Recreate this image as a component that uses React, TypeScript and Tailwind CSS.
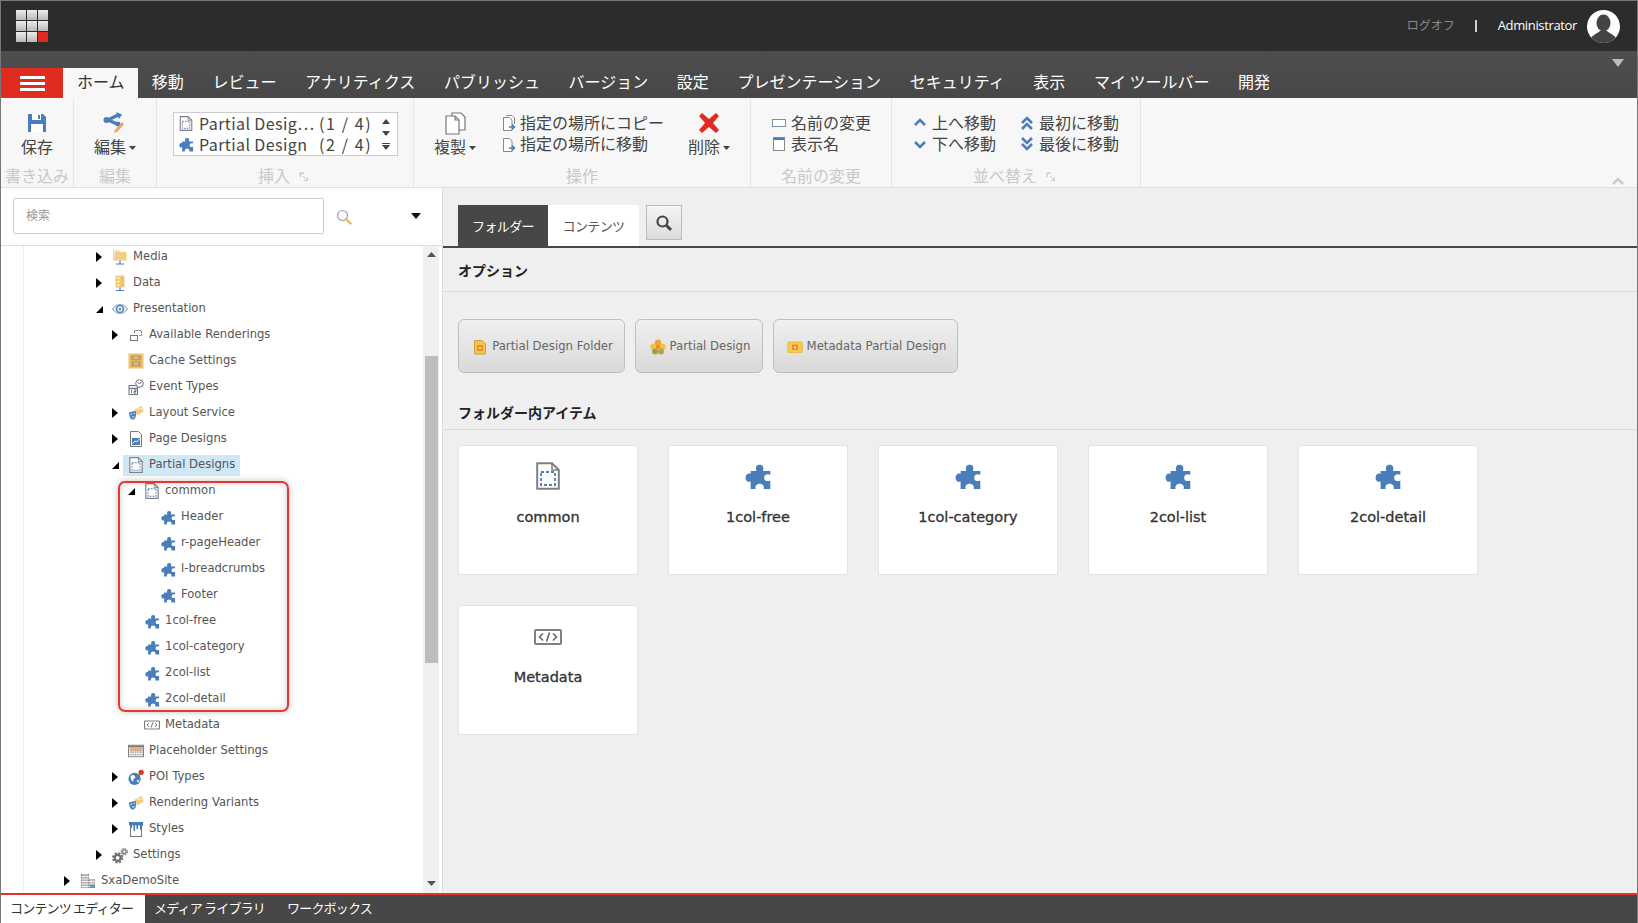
import React from "react";

const BLUE = "#4a7ebb";

function Puzzle({ s = 16, c = BLUE }: { s?: number; c?: string }) {
  return (
    <svg width={s} height={s} viewBox="0 0 24 24" className="shrink-0">
      <path fill={c} d="M5 7H10C9 3 10.5 1.5 13 1.5C15.5 1.5 17 3 16 7H22.5V10.5C19.5 9 17 10.5 17 13C17 15.5 19.5 17 22.5 15.5V23H16.5C17.5 20.5 15.5 18.5 13 18.5C10.5 18.5 8.5 20.5 9.5 23H5V16.5C2.5 17.5 .5 15.5 .5 13C.5 10.5 2.5 8.7 5 9.7Z" />
    </svg>
  );
}
function DashDoc({ w = 16, h = 16 }: { w?: number; h?: number }) {
  return (
    <svg width={w} height={h} viewBox="0 0 24 28" className="shrink-0">
      <path d="M1.2 1.2H16L22.8 8V26.8H1.2Z" fill="#fff" stroke="#808080" strokeWidth="2" />
      <path d="M16 1.5V8H22.5" fill="none" stroke="#808080" strokeWidth="1.5" />
      <rect x="5" y="10" width="14" height="13" fill="none" stroke="#4a7ebb" strokeWidth="1.8" strokeDasharray="3 2" />
    </svg>
  );
}
function CodeBox({ w = 16, h = 10 }: { w?: number; h?: number }) {
  return (
    <svg width={w} height={h} viewBox="0 0 28 16" className="shrink-0">
      <rect x="1" y="1" width="26" height="14" rx="1" fill="#fff" stroke="#808080" strokeWidth="2" />
      <path d="M9 4.5L5.5 8L9 11.5M19 4.5L22.5 8L19 11.5M15.5 3.5L12.5 12.5" fill="none" stroke="#666" strokeWidth="1.6" />
    </svg>
  );
}
function Folder() {
  return (
    <svg width="16" height="17" viewBox="0 0 16 17">
      <path d="M1.5 1H6.500L8 3H14.500V11.500H1.500Z" fill="#f5cc86" />
      <path d="M1.500 1H6.500L8 3H3V8L1.500 10Z" fill="#f7f0e2" stroke="#e3c48d" strokeWidth=".5" />
      <path d="M8 11.500V15M4 15H12" stroke="#4a7ebb" strokeWidth="1.200" />
    </svg>
  );
}
function DataIcon() {
  return (
    <svg width="16" height="17" viewBox="0 0 16 17">
      <rect x="3.500" y=".5" width="9" height="12" fill="#f2c879" />
      <path d="M5 3H8M5 6.500H8M5 10H8" stroke="#fff" />
      <path d="M10 3H11M10 6.500H11M10 10H11" stroke="#c98f3a" />
      <path d="M8 12.500V15.500M4 15.500H12" stroke="#4a7ebb" strokeWidth="1.200" />
    </svg>
  );
}
function Eye() {
  return (
    <svg width="16" height="16" viewBox="0 0 16 16">
      <path d="M.5 8C3 4 6 3.500 8 3.500S13 4 15.500 8C13 12 10 12.500 8 12.500S3 12 .5 8Z" fill="#e4ecf6" stroke="#8c9fb8" />
      <circle cx="8" cy="8" r="3.400" fill="#fff" stroke="#4a7ebb" strokeWidth="1.400" />
      <circle cx="8" cy="8" r="1.500" fill="#6d8fba" />
    </svg>
  );
}
function Renderings() {
  return (
    <svg width="16" height="16" viewBox="0 0 16 16" fill="none" stroke="#777">
      <rect x="2.500" y="8.500" width="7" height="5" />
      <path d="M6.500 6V3.500H13.500V8.500H11" strokeDasharray="2.500 .8" />
    </svg>
  );
}
function Cache() {
  return (
    <svg width="16" height="16" viewBox="0 0 16 16">
      <rect x=".5" y=".5" width="15" height="15" fill="#efc06e" />
      <rect x="3" y="2.500" width="10" height="5" fill="#bfa05f" />
      <rect x="3" y="8.500" width="10" height="5" fill="#bfa05f" />
      <path d="M6 5H10M6 11H10" stroke="#f5e3b8" />
    </svg>
  );
}
function EventIcon() {
  return (
    <svg width="16" height="16" viewBox="0 0 16 16" fill="none" stroke="#707070">
      <rect x="1" y="6.500" width="8.500" height="9" />
      <path d="M1 9.500H9.500" strokeWidth="1.500" stroke="#5a7ea8" />
      <path d="M3.500 11V14M6 11H8V12.500H6V14H8" />
      <circle cx="11.500" cy="4.500" r="3.800" fill="#fff" />
      <path d="M9.500 3L11.500 5L13.500 2.500" />
    </svg>
  );
}
function Masks() {
  return (
    <svg width="17" height="16" viewBox="0 0 17 16">
      <path d="M7 4.500L14 .5C15.500 2 16.500 4.500 16.500 6.500L10 10.500Z" fill="#f3cb7c" />
      <circle cx="11" cy="3.800" r=".9" fill="#fff" />
      <circle cx="14" cy="3.500" r=".9" fill="#fff" />
      <path d="M1 7.500L8 5.500C9.500 9 8.500 14 5.500 15C2.500 15.500 1 11 1 7.500Z" fill="#4a7ebb" />
      <path d="M2.500 9.500L4.500 9M6 8.500L7.500 8M4 12C5 12.800 6 12.500 7 11" stroke="#fff" fill="none" />
    </svg>
  );
}
function PageIcon() {
  return (
    <svg width="16" height="16" viewBox="0 0 16 16">
      <path d="M2.500 .5H10.500L13.500 3.500V15.500H2.500Z" fill="#fff" stroke="#777" />
      <rect x="4" y="7" width="8" height="7" fill="#4a7ebb" />
      <path d="M4.500 12.500L7 10L8.500 11L11.500 8" stroke="#fff" fill="none" />
    </svg>
  );
}
function Placeholder() {
  return (
    <svg width="18" height="16" viewBox="0 0 18 16">
      <rect x=".5" y="1.500" width="17" height="13" fill="#fff" stroke="#777" />
      <rect x="1" y="2" width="16" height="2" fill="#777" />
      <rect x="2" y="4.500" width="14" height="4" fill="#f0b483" />
      <path d="M3.500 4V14.500M6 4V14.500M8.500 4V14.500M11 4V14.500M13.500 4V14.500M16 4V14.500M1 7H17M1 9.500H17M1 12H17" stroke="#aaa" strokeWidth=".7" />
    </svg>
  );
}
function Poi() {
  return (
    <svg width="17" height="17" viewBox="0 0 17 17">
      <circle cx="7" cy="10" r="6.500" fill="#4a7ebb" />
      <path d="M2.500 7L6 5.500L8 8.500L5.500 10.500L6 13L3.500 11.500ZM9 12L12 10.500L11 14Z" fill="#fff" />
      <path d="M11.500 7L13.500 4" stroke="#777" strokeWidth="1.200" />
      <circle cx="14" cy="3" r="2.800" fill="#e2332a" />
    </svg>
  );
}
function Styles() {
  return (
    <svg width="16" height="16" viewBox="0 0 16 16">
      <rect x="2.500" y="2.500" width="11" height="13" fill="#fff" stroke="#777" />
      <path d="M1 1H15V5H13.500V9H12V4.500H10V8H8.500V4.500H7V10H5.500V4.500H4V7H2.500V4.500H1Z" fill="#4a7ebb" />
    </svg>
  );
}
function Gears() {
  return (
    <svg width="17" height="17" viewBox="0 0 17 17">
      <circle cx="6" cy="11" r="3.200" fill="none" stroke="#6f6f6f" strokeWidth="2.400" />
      <circle cx="6" cy="11" r="5" fill="none" stroke="#6f6f6f" strokeWidth="2" strokeDasharray="2.300 1.630" />
      <circle cx="13" cy="4.500" r="2" fill="none" stroke="#8a8a8a" strokeWidth="1.600" />
      <circle cx="13" cy="4.500" r="3.300" fill="none" stroke="#8a8a8a" strokeWidth="1.400" strokeDasharray="1.600 1" />
    </svg>
  );
}
function Building() {
  return (
    <svg width="16" height="16" viewBox="0 0 16 16">
      <rect x="1" y="1" width="8" height="14" fill="#888" />
      <rect x="9" y="6" width="6" height="9" fill="#9a9a9a" />
      <path d="M3 1V15M5 1V15M7 1V15M11 6V15M13 6V15M1 3.500H9M1 6H9M1 8.500H15M1 11H15M1 13.500H15" stroke="#fff" strokeWidth=".8" />
      <rect x="10" y="11.500" width="5" height="3.500" fill="#4a7ebb" opacity=".75" />
    </svg>
  );
}
function Mag({ s = 16, c = "#9fa6ad" }: { s?: number; c?: string }) {
  return (
    <svg width={s} height={s} viewBox="0 0 16 16">
      <circle cx="6.500" cy="6.500" r="5" fill="#fff" stroke={c} strokeWidth="1.200" />
      <path d="M10 10L14.500 14.500" stroke="#e8b96a" strokeWidth="2.400" strokeLinecap="round" />
    </svg>
  );
}
function Caret() {
  return (
    <svg width="7" height="4" viewBox="0 0 7 4" className="ml-[3px] mt-[4px] shrink-0">
      <path d="M0 0H7L3.500 4Z" fill="#444" />
    </svg>
  );
}
function Launcher() {
  return (
    <svg width="9" height="9" viewBox="0 0 9 9" className="ml-[9px] mr-[4px] mt-[3px]">
      <path d="M.5 .5H5V2H2V5H.5Z" fill="#ccc" />
      <path d="M4 4L8.500 8.500M8.500 5V8.500H5" stroke="#ccc" fill="none" />
    </svg>
  );
}

const rows: { t: string; l: 0 | 2 | 3 | 4 | 5; a?: "r" | "d"; i: React.ReactNode; sel?: boolean }[] = [
  { t: "Media", l: 2, a: "r", i: <Folder /> },
  { t: "Data", l: 2, a: "r", i: <DataIcon /> },
  { t: "Presentation", l: 2, a: "d", i: <Eye /> },
  { t: "Available Renderings", l: 3, a: "r", i: <Renderings /> },
  { t: "Cache Settings", l: 3, i: <Cache /> },
  { t: "Event Types", l: 3, i: <EventIcon /> },
  { t: "Layout Service", l: 3, a: "r", i: <Masks /> },
  { t: "Page Designs", l: 3, a: "r", i: <PageIcon /> },
  { t: "Partial Designs", l: 3, a: "d", i: <DashDoc />, sel: true },
  { t: "common", l: 4, a: "d", i: <DashDoc /> },
  { t: "Header", l: 5, i: <Puzzle s={15} /> },
  { t: "r-pageHeader", l: 5, i: <Puzzle s={15} /> },
  { t: "l-breadcrumbs", l: 5, i: <Puzzle s={15} /> },
  { t: "Footer", l: 5, i: <Puzzle s={15} /> },
  { t: "1col-free", l: 4, i: <Puzzle s={15} /> },
  { t: "1col-category", l: 4, i: <Puzzle s={15} /> },
  { t: "2col-list", l: 4, i: <Puzzle s={15} /> },
  { t: "2col-detail", l: 4, i: <Puzzle s={15} /> },
  { t: "Metadata", l: 4, i: <CodeBox /> },
  { t: "Placeholder Settings", l: 3, i: <Placeholder /> },
  { t: "POI Types", l: 3, a: "r", i: <Poi /> },
  { t: "Rendering Variants", l: 3, a: "r", i: <Masks /> },
  { t: "Styles", l: 3, a: "r", i: <Styles /> },
  { t: "Settings", l: 2, a: "r", i: <Gears /> },
  { t: "SxaDemoSite", l: 0, a: "r", i: <Building /> },
];
const indent: Record<number, string> = {
  0: "pl-[36px]",
  2: "pl-[68px]",
  3: "pl-[84px]",
  4: "pl-[100px]",
  5: "pl-[116px]",
};

const tabs = ["移動", "レビュー", "アナリティクス", "パブリッシュ", "バージョン", "設定", "プレゼンテーション", "セキュリティ", "表示", "マイ ツールバー", "開発"];
const cards = ["common", "1col-free", "1col-category", "2col-list", "2col-detail", "Metadata"];

function Group({ w, label, launcher, className, children }: { w: string; label: string; launcher?: boolean; className?: string; children: React.ReactNode }) {
  return (
    <div className={`${w} shrink-0 flex flex-col border-r border-[#e6e6e6]`}>
      <div className={`h-[66px] flex ${className ?? ""}`}>{children}</div>
      <div className="h-[24px] flex items-center justify-center text-[16px] leading-[24px] text-[#c9c9c9]">
        {label}
        {launcher && <Launcher />}
      </div>
    </div>
  );
}
function Large({ icon, label, caret }: { icon: React.ReactNode; label: string; caret?: boolean }) {
  return (
    <div className="flex flex-col items-center pt-[14px]">
      <div className="h-[22px] flex items-center justify-center">{icon}</div>
      <div className="h-[24px] flex items-center text-[16px] leading-[24px] text-[#444]">
        {label}
        {caret && <Caret />}
      </div>
    </div>
  );
}
function Small({ icon, label }: { icon: React.ReactNode; label: string }) {
  return (
    <div className="h-[21px] flex items-center text-[16px] leading-[21px] text-[#444]">
      <span className="w-[16px] h-[16px] flex items-center justify-center mr-[4px]">{icon}</span>
      {label}
    </div>
  );
}
function Chev({ dir, dbl }: { dir: "u" | "d"; dbl?: boolean }) {
  const d = dir === "u" ? "M2 9L7 4L12 9" : "M2 5L7 10L12 5";
  return (
    <svg width="14" height="14" viewBox="0 0 14 14" fill="none" stroke={BLUE} strokeWidth="2.600">
      {dbl ? (
        dir === "u" ? (
          <>
            <path d="M2 7L7 2L12 7" />
            <path d="M2 13L7 8L12 13" />
          </>
        ) : (
          <>
            <path d="M2 1L7 6L12 1" />
            <path d="M2 7L7 12L12 7" />
          </>
        )
      ) : (
        <path d={d} />
      )}
    </svg>
  );
}
function CopyDoc({ arrow }: { arrow?: boolean }) {
  return (
    <svg width="15" height="16" viewBox="0 0 15 16" fill="#fff" stroke="#888">
      {!arrow && <path d="M5.500 .5H11L13.500 3V9" />}
      <path d="M2.500 2.500H8.500L11 5V15.500H2.500Z" />
      <path d="M8 12H13.500M11 9.500L13.500 12L11 14.500" stroke={BLUE} strokeWidth="1.500" fill="none" />
    </svg>
  );
}

export default function App() {
  return (
    <div className="h-screen w-full overflow-hidden flex flex-col border-l border-t border-r border-[#777] bg-[#efefef] font-['DejaVu_Sans','Noto_Sans_CJK_JP',sans-serif]">
      {/* top bar */}
      <header className="h-[50px] shrink-0 bg-[#2c2c2c] flex items-center pl-[15px] pr-[17px]">
        <div className="grid grid-cols-3 gap-[1px] w-[32px] h-[32px]">
          {Array.from({ length: 9 }).map((_, i) => (
            <div key={i} className={i === 8 ? "bg-[#e22b1f]" : "bg-gradient-to-b from-[#ececec] to-[#b9b9b9]"} />
          ))}
        </div>
        <div className="ml-auto flex items-center font-['Open_Sans','Noto_Sans_CJK_JP',sans-serif] text-[13px]">
          <span className="text-[#8a8a8a] text-[12px]">ログオフ</span>
          <span className="ml-[20px] w-[2px] h-[12px] bg-[#cfcfcf]" />
          <span className="text-white ml-[21px] tracking-[-0.35px]">Administrator</span>
          <svg width="33" height="33" viewBox="0 0 33 33" className="ml-[10px]">
            <defs>
              <clipPath id="av">
                <circle cx="16.500" cy="16.500" r="16.500" />
              </clipPath>
            </defs>
            <circle cx="16.500" cy="16.500" r="16.500" fill="#fff" />
            <g clipPath="url(#av)" fill="#444">
              <ellipse cx="16.500" cy="13" rx="7" ry="8.500" />
              <path d="M2 33C3 25 10 24 13 21H20C23 24 30 25 31 33Z" />
            </g>
          </svg>
        </div>
      </header>

      {/* tab strip */}
      <nav className="h-[47px] shrink-0 relative bg-gradient-to-b from-[#4e4e4e] to-[#474747] flex items-end text-[16px] leading-[26px] text-white font-['Noto_Sans_CJK_JP',sans-serif]">
        <div className="w-[62px] h-[30px] bg-[#e22b1f] flex flex-col items-center justify-center gap-[3px]">
          <i className="block w-[25px] h-[3px] bg-white" />
          <i className="block w-[25px] h-[3px] bg-white" />
          <i className="block w-[25px] h-[3px] bg-white" />
        </div>
        <div className="h-[30px] pl-[14px] pr-[13px] bg-[#f7f7f7] text-[#333]">ホーム</div>
        {tabs.map((t) => (
          <div key={t} className="h-[30px] px-[14.3px] whitespace-nowrap">
            {t}
          </div>
        ))}
        <svg width="12" height="8" viewBox="0 0 12 8" className="absolute right-[13px] top-[8px]">
          <path d="M0 0H12L6 8Z" fill="#bdbdbd" />
        </svg>
      </nav>

      {/* ribbon */}
      <section className="h-[90px] shrink-0 bg-[#f7f7f7] border-b border-[#dfdfdf] flex relative font-['Noto_Sans_CJK_JP',sans-serif]">
        <Group w="w-[73px]" label="書き込み" className="justify-center">
          <Large
            label="保存"
            icon={
              <svg width="20" height="20" viewBox="0 0 20 20">
                <path d="M1 1H16L19 4V19H1Z" fill={BLUE} />
                <rect x="5" y="1" width="9" height="6" fill="#fff" />
                <rect x="4" y="11" width="12" height="8" fill="#fff" />
                <rect x="11" y="2" width="2" height="4" fill={BLUE} />
              </svg>
            }
          />
        </Group>
        <Group w="w-[83px]" label="編集" className="justify-center">
          <Large
            label="編集"
            caret
            icon={
              <svg width="23" height="22" viewBox="0 0 23 22">
                <path d="M15 3L5 8L14 12" fill="none" stroke={BLUE} strokeWidth="3.200" />
                <path d="M13 0L19 2.500L16 7Z" fill={BLUE} />
                <circle cx="3.500" cy="8" r="3" fill={BLUE} />
                <circle cx="15" cy="12" r="2.500" fill={BLUE} />
                <path d="M19 10L12 18L11 21L14 20L21 12.500Z" fill="#eda45e" />
              </svg>
            }
          />
        </Group>
        <Group w="w-[257px]" label="挿入" launcher>
          <div className="ml-[16px] mt-[14px] w-[225px] h-[44px] bg-white border border-[#ccc] flex text-[16px] leading-[21px] text-[#444] tracking-[0.4px] whitespace-nowrap">
            <div className="flex-1 pl-[5px]">
              <div className="flex items-center h-[21px]">
                <DashDoc w={14} h={15} />
                <span className="ml-[6px] w-[115px]">Partial Desig⋯</span>
                <span className="ml-[5px] tracking-[1.600px]">(1 / 4)</span>
              </div>
              <div className="flex items-center h-[21px]">
                <Puzzle s={15} />
                <span className="ml-[5px] w-[115px]">Partial Design</span>
                <span className="ml-[5px] tracking-[1.600px]">(2 / 4)</span>
              </div>
            </div>
            <div className="w-[22px] flex flex-col items-center justify-center gap-[7px]">
              <svg width="8" height="5" viewBox="0 0 8 5"><path d="M4 0L8 5H0Z" fill="#444" /></svg>
              <svg width="8" height="5" viewBox="0 0 8 5"><path d="M0 0H8L4 5Z" fill="#444" /></svg>
              <svg width="8" height="7" viewBox="0 0 8 7"><path d="M0 0H8V1H0ZM0 2H8L4 7Z" fill="#444" /></svg>
            </div>
          </div>
        </Group>
        <Group w="w-[337px]" label="操作" className="pl-[20px]">
          <Large
            label="複製"
            caret
            icon={
              <svg width="22" height="23" viewBox="0 0 22 23" fill="#fff" stroke="#777" strokeWidth="1.200">
                <path d="M8 1H17L21 5V18H8Z" />
                <path d="M2 4H11L15 8V22H2Z" />
                <path d="M11 4V8H15" fill="none" />
              </svg>
            }
          />
          <div className="ml-[24px] pt-[14px]">
            <Small icon={<CopyDoc />} label="指定の場所にコピー" />
            <Small icon={<CopyDoc arrow />} label="指定の場所に移動" />
          </div>
          <div className="ml-[24px]">
            <Large
              label="削除"
              caret
              icon={
                <svg width="22" height="22" viewBox="0 0 22 22">
                  <path d="M4 1L11 7L18 1L21 4L15 11L21 18L18 21L11 15L4 21L1 18L7 11L1 4Z" fill="#e22b1f" />
                </svg>
              }
            />
          </div>
        </Group>
        <Group w="w-[141px]" label="名前の変更" className="pl-[20px] pt-[14px] flex-col">
          <Small
            label="名前の変更"
            icon={
              <svg width="14" height="8" viewBox="0 0 14 8" fill="#fff" stroke="#7c8ea5">
                <rect x=".5" y=".5" width="13" height="7" />
              </svg>
            }
          />
          <Small
            label="表示名"
            icon={
              <svg width="12" height="14" viewBox="0 0 12 14" fill="#fff" stroke="#888">
                <rect x=".5" y=".5" width="11" height="13" />
                <rect x="1" y="1" width="10" height="2" fill={BLUE} stroke="none" />
              </svg>
            }
          />
        </Group>
        <Group w="w-[249px]" label="並べ替え" launcher className="pl-[20px] pt-[14px]">
          <div>
            <Small icon={<Chev dir="u" />} label="上へ移動" />
            <Small icon={<Chev dir="d" />} label="下へ移動" />
          </div>
          <div className="ml-[23px]">
            <Small icon={<Chev dir="u" dbl />} label="最初に移動" />
            <Small icon={<Chev dir="d" dbl />} label="最後に移動" />
          </div>
        </Group>
        <svg width="12" height="8" viewBox="0 0 12 8" className="absolute right-[13px] bottom-[2px]" fill="none" stroke="#ccc" strokeWidth="2.500">
          <path d="M1 7L6 2L11 7" />
        </svg>
      </section>

      {/* body */}
      <main className="flex-1 min-h-0 flex">
        <aside className="w-[441px] shrink-0 flex flex-col bg-white">
          <div className="h-[58px] shrink-0 border-b border-[#ddd] flex items-center pl-[12px] pr-[21px]">
            <div className="w-[311px] h-[36px] mb-[2px] border border-[#ccc] rounded-[2px] bg-white pl-[12px] text-[12px] leading-[32px] text-[#999] font-['Noto_Sans_CJK_JP',sans-serif]">
              検索
            </div>
            <span className="ml-[12px] mt-[1px]">
              <Mag />
            </span>
            <svg width="10" height="6" viewBox="0 0 10 6" className="ml-auto mt-[-1px]">
              <path d="M0 0H10L5 6Z" fill="#111" />
            </svg>
          </div>
          <div className="flex-1 min-h-0 flex overflow-hidden relative">
            <div className="flex-1 ml-[22px] border-l border-[#eee] overflow-hidden">
              <div className="mt-[-2px]">
                {rows.map((r) => (
                  <div key={r.t} className={`h-[26px] flex items-center text-[11.6px] text-[#555] ${indent[r.l]}`}>
                    <span className="w-[14px] h-[14px] flex items-center justify-center shrink-0">
                      {r.a === "r" && (
                        <svg width="6" height="10" viewBox="0 0 6 10">
                          <path d="M0 0L6 5L0 10Z" fill="#000" />
                        </svg>
                      )}
                      {r.a === "d" && (
                        <svg width="7" height="7" viewBox="0 0 7 7">
                          <path d="M7 0V7H0Z" fill="#000" />
                        </svg>
                      )}
                    </span>
                    <span className={`flex items-center h-[21px] ${r.sel ? "ml-[1px] pl-[5px] pr-[5px] bg-[#d0e7f6]" : "ml-[6px]"}`}>
                      <span className="w-[16px] h-[16px] flex items-center justify-center">{r.i}</span>
                      <span className="ml-[5px] whitespace-nowrap">{r.t}</span>
                    </span>
                  </div>
                ))}
              </div>
            </div>
            <div className="w-[16px] mr-[3px] bg-[#f0f0f0] flex flex-col items-center relative">
              <svg width="9" height="5" viewBox="0 0 9 5" className="mt-[6px]">
                <path d="M4.500 0L9 5H0Z" fill="#555" />
              </svg>
              <div className="w-[13px] h-[307px] mt-[99px] bg-[#bdbdbd]" />
              <svg width="9" height="5" viewBox="0 0 9 5" className="mt-auto mb-[7px]">
                <path d="M0 0H9L4.500 5Z" fill="#555" />
              </svg>
            </div>
            <div className="absolute left-[117px] top-[235px] w-[171px] h-[231px] rounded-[7px] border-2 border-[#ee3333] shadow-[0_0_6px_rgba(0,0,0,0.25),inset_0_0_6px_rgba(0,0,0,0.2)]" />
          </div>
        </aside>

        <div className="flex-1 min-w-0 border-l border-[#dcdcdc] bg-[#efefef]">
          <div className="h-[60px] border-b-2 border-[#474747] flex items-start pt-[17px] pl-[15px] font-['Noto_Sans_CJK_JP',sans-serif] text-[13px] tracking-[-0.6px]">
            <div className="w-[90px] h-[41px] bg-[#474747] text-white flex items-center justify-center">フォルダー</div>
            <div className="w-[91px] h-[41px] bg-white text-[#555] flex items-center justify-center">コンテンツ</div>
            <div className="ml-[7px] w-[36px] h-[35px] border border-[#bbb] bg-gradient-to-b from-[#f5f5f5] to-[#dcdcdc] flex items-center justify-center">
              <svg width="18" height="18" viewBox="0 0 18 18" fill="none" stroke="#444">
                <circle cx="7.500" cy="7.500" r="5" strokeWidth="2.200" />
                <path d="M11.500 11.500L16 16" strokeWidth="3" />
              </svg>
            </div>
          </div>
          <h2 className="h-[44px] pl-[15px] pt-[2px] flex items-center border-b border-[#dcdcdc] text-[14px] font-bold text-[#222] font-['Noto_Sans_CJK_JP',sans-serif]">オプション</h2>
          <div className="pt-[27px] pl-[15px] flex gap-[10px] text-[11.7px] text-[#666]">
            {[
              ["Partial Design Folder", "w-[167px]", "f"],
              ["Partial Design", "w-[128px]", "p"],
              ["Metadata Partial Design", "w-[185px]", "m"],
            ].map(([t, w, k]) => (
              <div key={t} className={`${w} h-[54px] border border-[#bfbfbf] rounded-[6px] bg-gradient-to-b from-[#f0f0f0] to-[#d9d9d9] flex items-center justify-center whitespace-nowrap pt-[2px] pl-[2px]`}>
                <svg width="16" height="16" viewBox="0 0 16 16" className="mr-[4px] shrink-0">
                  {k === "f" && (
                    <>
                      <path d="M2.500 1.500H10L13.500 5V15H2.500Z" fill="#f3c64a" stroke="#c9a04a" />
                      <rect x="5" y="6" width="6" height="6" fill="#f28a2e" />
                      <rect x="7" y="8" width="2" height="2" fill="#fbe39a" />
                    </>
                  )}
                  {k === "p" && (
                    <>
                      <circle cx="8" cy="4" r="3.400" fill="#e8a93a" />
                      <circle cx="3.500" cy="8" r="3.200" fill="#efc14a" />
                      <circle cx="12.500" cy="8" r="3.200" fill="#efc14a" />
                      <circle cx="5" cy="12.500" r="3" fill="#9aa04a" />
                      <circle cx="11" cy="12.500" r="3" fill="#b9a23f" />
                      <circle cx="8" cy="8" r="2.200" fill="#f28a2e" />
                    </>
                  )}
                  {k === "m" && (
                    <>
                      <rect x=".8" y="3" width="14.400" height="10.500" rx="1" fill="#f5ca4a" stroke="#f0b84a" />
                      <rect x="5" y="5.500" width="6" height="5.500" fill="#f28a2e" />
                      <rect x="7" y="7.500" width="2" height="2" fill="#fbe39a" />
                    </>
                  )}
                </svg>
                {t}
              </div>
            ))}
          </div>
          <h2 className="h-[57px] pl-[15px] pb-[6px] flex items-end border-b border-[#dcdcdc] text-[14px] font-bold text-[#222] font-['Noto_Sans_CJK_JP',sans-serif]">フォルダー内アイテム</h2>
          <div className="pt-[15px] pl-[15px] flex flex-wrap gap-x-[30px] gap-y-[30px]">
            {cards.map((c, i) => (
              <div key={c} className="w-[180px] h-[130px] bg-white border border-[#e4e4e4] flex flex-col items-center text-[14.5px] text-[#333] [-webkit-text-stroke:0.3px_#333]">
                <div className={`h-[56px] flex items-center justify-center ${i === 5 ? "mt-[3px]" : "mt-[2px]"}`}>
                  {i === 0 ? <DashDoc w={24} h={28} /> : i === 5 ? <CodeBox w={28} h={16} /> : <Puzzle s={27} />}
                </div>
                <div className={`leading-[24px] ${i === 5 ? "" : "mt-[1px]"}`}>{c}</div>
              </div>
            ))}
          </div>
        </div>
      </main>

      {/* bottom */}
      <footer className="h-[30px] shrink-0 border-t-2 border-[#e8332a] bg-[#474747] flex text-[13px] tracking-[-0.8px] text-white leading-[26px] font-['Noto_Sans_CJK_JP',sans-serif]">
        <div className="w-[144px] pl-[9px] bg-white text-[#333]">コンテンツ エディター</div>
        <div className="pl-[9px]">メディア ライブラリ</div>
        <div className="pl-[22px]">ワークボックス</div>
      </footer>
    </div>
  );
}
